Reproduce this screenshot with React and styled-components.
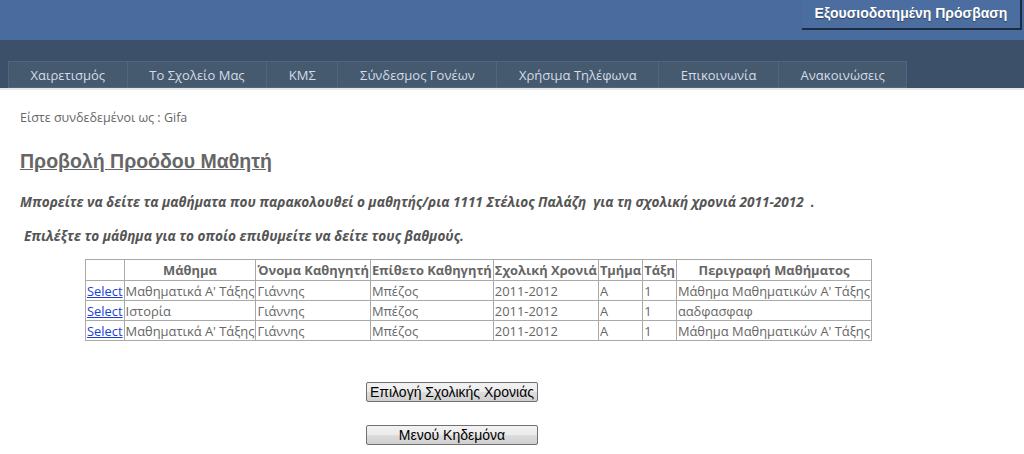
import styled, { createGlobalStyle } from 'styled-components';

const GlobalStyle = createGlobalStyle`
  body {
    margin: 0;
    background: #fff;
    font-family: "Open Sans", "Noto Sans", sans-serif;
  }
`;

const menu = ['Χαιρετισμός', 'Το Σχολείο Μας', 'ΚΜΣ', 'Σύνδεσμος Γονέων', 'Χρήσιμα Τηλέφωνα', 'Επικοινωνία', 'Ανακοινώσεις'];

const headers = ['', 'Μάθημα', 'Όνομα Καθηγητή', 'Επίθετο Καθηγητή', 'Σχολική Χρονιά', 'Τμήμα', 'Τάξη', 'Περιγραφή Μαθήματος'];

const rows = [
  ['Μαθηματικά Α\' Τάξης', 'Γιάννης', 'Μπέζος', '2011-2012', 'A', '1', 'Μάθημα Μαθηματικών Α\' Τάξης'],
  ['Ιστορία', 'Γιάννης', 'Μπέζος', '2011-2012', 'A', '1', 'ααδφασφαφ'],
  ['Μαθηματικά Α\' Τάξης', 'Γιάννης', 'Μπέζος', '2011-2012', 'A', '1', 'Μάθημα Μαθηματικών Α\' Τάξης'],
];

const App = () => (
  <>
    <GlobalStyle />
    <TopBar>
      <AccessButton>Εξουσιοδοτημένη Πρόσβαση</AccessButton>
    </TopBar>
    <NavBand>
      <Nav>
        {menu.map((m) => (
          <NavItem key={m}>{m}</NavItem>
        ))}
      </Nav>
    </NavBand>
    <Main>
      <LoggedIn>Είστε συνδεδεμένοι ως : Gifa</LoggedIn>
      <Title>Προβολή Προόδου Μαθητή</Title>
      <Note>Μπορείτε να δείτε τα μαθήματα που παρακολουθεί ο μαθητής/ρια 1111 Στέλιος Παλάζη&nbsp; για τη σχολική χρονιά 2011-2012&nbsp; .</Note>
      <Note $indent>Επιλέξτε το μάθημα για το οποίο επιθυμείτε να δείτε τους βαθμούς.</Note>
      <Grid>
        <thead>
          <tr>
            {headers.map((h, i) => (
              <Th key={i}>{h}</Th>
            ))}
          </tr>
        </thead>
        <tbody>
          {rows.map((r, i) => (
            <tr key={i}>
              <Td><SelectLink href="#">Select</SelectLink></Td>
              {r.map((c, j) => (
                <Td key={j}>{c}</Td>
              ))}
            </tr>
          ))}
        </tbody>
      </Grid>
      <Actions>
        <Button>Επιλογή Σχολικής Χρονιάς</Button>
        <Button>Μενού Κηδεμόνα</Button>
      </Actions>
    </Main>
  </>
);

export default App;

const TopBar = styled.div`
  height: 40px;
  background: #4a6b9d;
  display: flex;
  justify-content: flex-end;
  align-items: flex-start;
  padding-right: 2px;
`;

const AccessButton = styled.div`
  width: 220px;
  height: 30px;
  box-sizing: border-box;
  padding-top: 5px;
  text-align: center;
  font-family: "Liberation Sans", Arial, sans-serif;
  font-weight: bold;
  font-size: 14px;
  color: #fff;
  background: #4c6d9f;
  border-right: 2px solid #1e2c40;
  border-bottom: 2px solid #1e2c40;
  text-shadow: 0 1px 1px rgba(0, 0, 0, 0.4);
`;

const NavBand = styled.div`
  height: 50px;
  background: #3c5069;
  border-bottom: 2px solid #e6e8ea;
  padding: 21px 0 0 8px;
  box-sizing: border-box;
`;

const Nav = styled.div`
  display: flex;
  height: 27px;
`;

const NavItem = styled.div`
  height: 27px;
  box-sizing: border-box;
  padding: 0 21.6px;
  line-height: 26px;
  font-size: 13px;
  color: #d4dce6;
  background: #45596f;
  border: 1px solid #51657b;
  border-left: none;
  &:first-child {
    border-left: 1px solid #51657b;
  }
`;

const Main = styled.div`
  padding: 19px 0 0 20px;
  color: #666;
`;

const LoggedIn = styled.div`
  font-size: 12.5px;
  color: #666;
  height: 18px;
`;

const Title = styled.h2`
  margin: 23px 0 0;
  font-family: "Liberation Sans", Arial, sans-serif;
  font-size: 19.5px;
  font-weight: bold;
  text-decoration: underline;
  color: #666;
  height: 23px;
`;

const Note = styled.p`
  margin: ${(p) => (p.$indent ? '15px 0 0 4px' : '19px 0 0')};
  font-size: 13.6px;
  font-style: italic;
  font-weight: bold;
  color: #555;
  white-space: pre;
`;

const Grid = styled.table`
  border-collapse: collapse;
  margin: 14px 0 0 65px;
  font-size: 12.9px;
  color: #666;
`;

const Th = styled.th`
  border: 1px solid #a9a9a9;
  padding: 0 1px;
  height: 20px;
  font-weight: bold;
  white-space: nowrap;
  color: #666;
`;

const Td = styled.td`
  border: 1px solid #a9a9a9;
  padding: 0 1px;
  height: 19px;
  white-space: nowrap;
`;

const SelectLink = styled.a`
  color: #1b3fd9;
  text-decoration: underline;
`;

const Actions = styled.div`
  display: flex;
  flex-direction: column;
  align-items: flex-start;
  gap: 23px;
  margin: 41px 0 0 346px;
`;

const Button = styled.button`
  width: 172px;
  height: 20px;
  padding: 0 2px;
  overflow: hidden;
  white-space: nowrap;
  font-family: "Liberation Sans", Arial, sans-serif;
  font-size: 14px;
  color: #000;
  border: 1px solid #707070;
  border-radius: 2px;
  background: linear-gradient(#f2f2f2, #ebebeb 50%, #dddddd 51%, #cfcfcf);
  text-align: center;
`;
